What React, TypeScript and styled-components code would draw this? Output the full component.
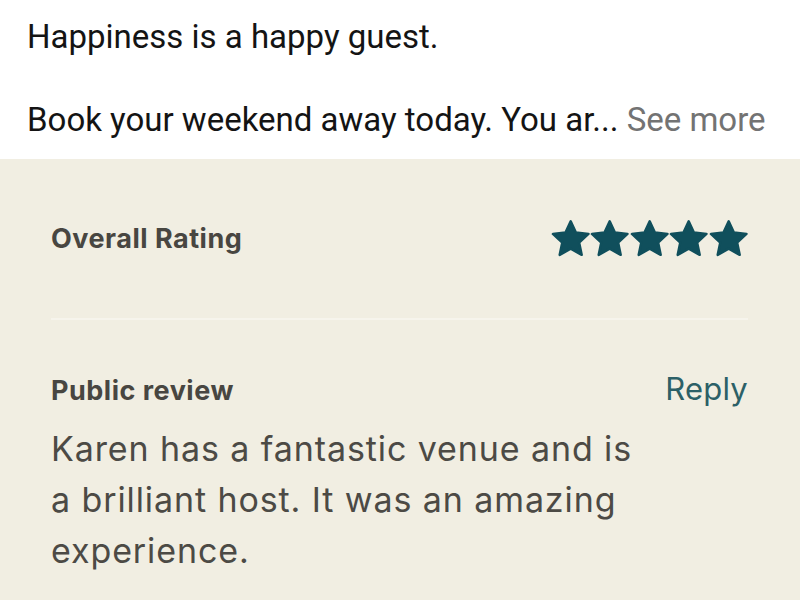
import React from "react";
import styled, { createGlobalStyle } from "styled-components";

const Global = createGlobalStyle`
  html, body { margin: 0; padding: 0; background: #f1eee2; }
  body { width: 800px; height: 600px; overflow: hidden; }
`;

const Page = styled.div`
  width: 800px;
  height: 600px;
  display: flex;
  flex-direction: column;
`;

const PostArea = styled.section`
  background: #ffffff;
  height: 159px;
  padding: 17px 27px 0 27px;
  box-sizing: border-box;
  font-family: Roboto, "Liberation Sans", sans-serif;
  color: #141414;
  font-size: 33px;
`;

const PostLine = styled.p`
  margin: 0 0 43px 0;
  line-height: 40px;
  white-space: nowrap;
`;

const SeeMore = styled.span`
  color: #737373;
`;

const ReviewArea = styled.section`
  flex: 1;
  background: #f1eee2;
  padding: 0 52px 0 51px;
  box-sizing: border-box;
  display: flex;
  flex-direction: column;
`;

const RatingRow = styled.div`
  display: flex;
  justify-content: space-between;
  align-items: center;
  height: 161px;
  border-bottom: 2px solid #f6f4ec;
  box-sizing: border-box;
`;

const Label = styled.h3`
  margin: 0;
  font-family: Inter, "Noto Sans", sans-serif;
  font-weight: 700;
  font-size: 27px;
  line-height: 40px;
  letter-spacing: 0.5px;
  color: #484641;
`;

const Stars = styled.div`
  display: flex;
`;

const ReviewHead = styled.div`
  display: flex;
  justify-content: space-between;
  align-items: baseline;
  margin-top: 49px;
`;

const ReplyLink = styled.a`
  font-family: Inter, "Noto Sans", sans-serif;
  font-size: 31px;
  line-height: 40px;
  font-weight: 400;
  color: #2c6067;
  text-decoration: none;
  letter-spacing: 0.2px;
`;

const ReviewText = styled.p`
  margin: 12px 0 0 0;
  width: 600px;
  font-family: Inter, "Noto Sans", sans-serif;
  font-weight: 400;
  font-size: 34px;
  line-height: 51px;
  letter-spacing: 0.9px;
  color: #4c4a45;
`;

const Star = () => (
  <svg width="39.4" height="38" viewBox="0 0 40 38.5">
    <path
      fill="#104f5c"
      stroke="#104f5c"
      strokeWidth="2.5"
      strokeLinejoin="round"
      d="M20 1.3 L25.29 12.72 L38.07 14.13 L28.56 22.78 L31.17 35.37 L20 29 L8.83 35.37 L11.44 22.78 L1.93 14.13 L14.71 12.72 Z"
    />
  </svg>
);

export default function App() {
  return (
    <>
      <Global />
      <Page>
        <PostArea>
          <PostLine>Happiness is a happy guest.</PostLine>
          <PostLine>
            Book your weekend away today. You ar... <SeeMore>See more</SeeMore>
          </PostLine>
        </PostArea>
        <ReviewArea>
          <RatingRow>
            <Label>Overall Rating</Label>
            <Stars>
              {[0, 1, 2, 3, 4].map((i) => (
                <Star key={i} />
              ))}
            </Stars>
          </RatingRow>
          <ReviewHead>
            <Label>Public review</Label>
            <ReplyLink href="#">Reply</ReplyLink>
          </ReviewHead>
          <ReviewText>
            Karen has a fantastic venue and is a brilliant host. It was an amazing experience.
          </ReviewText>
        </ReviewArea>
      </Page>
    </>
  );
}
